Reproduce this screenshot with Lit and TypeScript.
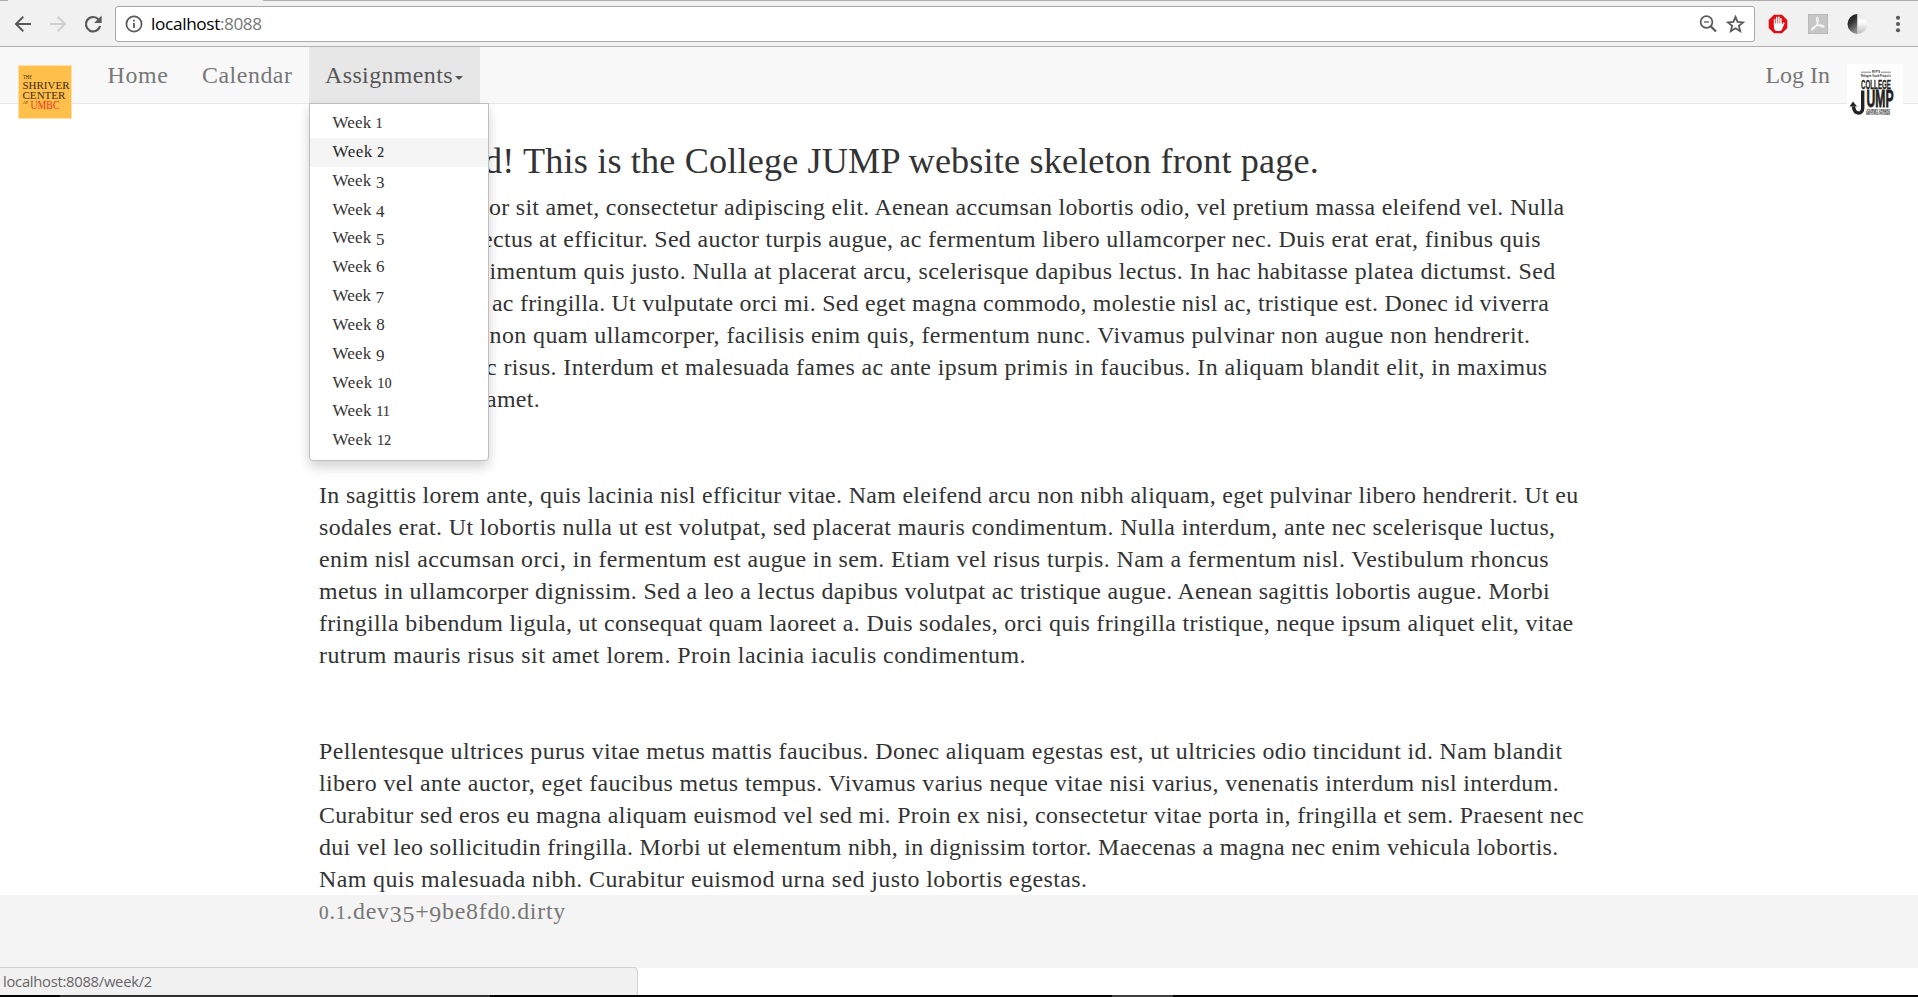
import { LitElement, html, css } from "lit";
import { customElement, property } from "lit/decorators.js";
import { styleMap } from "lit/directives/style-map.js";

/** One run of text whose tracking is adjusted so that it spans a given width. */
@customElement("fit-text")
class FitText extends LitElement {
  @property() text = "";
  @property({ type: Number }) span = 0;
  @property({ type: Boolean }) oldstyle = false;

  static styles = css`
    :host { display: inline-block; white-space: pre; }
    .low { font-size: 0.8em; line-height: 0; -webkit-text-stroke: 0.2px currentColor; }
    .drop { vertical-align: -0.14em; line-height: 0; }
  `;

  firstUpdated() {
    const run = this.renderRoot.querySelector(".run") as HTMLElement;
    const natural = run.getBoundingClientRect().width;
    run.style.letterSpacing = `${(this.span - natural) / this.text.length}px`;
  }

  glyph(c: string) {
    if ("012".includes(c)) return html`<span class="low">${c}</span>`;
    if ("34579".includes(c)) return html`<span class="drop">${c}</span>`;
    return c;
  }

  render() {
    return html`<span class="run">${this.oldstyle ? [...this.text].map((c) => this.glyph(c)) : this.text}</span>`;
  }
}

type Line = { start?: number; text: string; end: number };

const LEFT = 319;

const PARAGRAPHS: Line[][] = [
  [
    { start: 489, text: "or sit amet, consectetur adipiscing elit. Aenean accumsan lobortis odio, vel pretium massa eleifend vel. Nulla", end: 1564.5 },
    { start: 482, text: "ectus at efficitur. Sed auctor turpis augue, ac fermentum libero ullamcorper nec. Duis erat erat, finibus quis", end: 1541 },
    { start: 489.5, text: "imentum quis justo. Nulla at placerat arcu, scelerisque dapibus lectus. In hac habitasse platea dictumst. Sed", end: 1555.5 },
    { start: 492, text: "ac fringilla. Ut vulputate orci mi. Sed eget magna commodo, molestie nisl ac, tristique est. Donec id viverra", end: 1549 },
    { start: 489.5, text: "non quam ullamcorper, facilisis enim quis, fermentum nunc. Vivamus pulvinar non augue non hendrerit.", end: 1530.5 },
    { start: 486, text: "c risus. Interdum et malesuada fames ac ante ipsum primis in faucibus. In aliquam blandit elit, in maximus", end: 1547.5 },
    { start: 486, text: "amet.", end: 540 },
  ],
  [
    { text: "In sagittis lorem ante, quis lacinia nisl efficitur vitae. Nam eleifend arcu non nibh aliquam, eget pulvinar libero hendrerit. Ut eu", end: 1578.5 },
    { text: "sodales erat. Ut lobortis nulla ut est volutpat, sed placerat mauris condimentum. Nulla interdum, ante nec scelerisque luctus,", end: 1555.5 },
    { text: "enim nisl accumsan orci, in fermentum est augue in sem. Etiam vel risus turpis. Nam a fermentum nisl. Vestibulum rhoncus", end: 1549 },
    { text: "metus in ullamcorper dignissim. Sed a leo a lectus dapibus volutpat ac tristique augue. Aenean sagittis lobortis augue. Morbi", end: 1550 },
    { text: "fringilla bibendum ligula, ut consequat quam laoreet a. Duis sodales, orci quis fringilla tristique, neque ipsum aliquet elit, vitae", end: 1573.5 },
    { text: "rutrum mauris risus sit amet lorem. Proin lacinia iaculis condimentum.", end: 1026 },
  ],
  [
    { text: "Pellentesque ultrices purus vitae metus mattis faucibus. Donec aliquam egestas est, ut ultricies odio tincidunt id. Nam blandit", end: 1562.5 },
    { text: "libero vel ante auctor, eget faucibus metus tempus. Vivamus varius neque vitae nisi varius, venenatis interdum nisl interdum.", end: 1559 },
    { text: "Curabitur sed eros eu magna aliquam euismod vel sed mi. Proin ex nisi, consectetur vitae porta in, fringilla et sem. Praesent nec", end: 1584 },
    { text: "dui vel leo sollicitudin fringilla. Morbi ut elementum nibh, in dignissim tortor. Maecenas a magna nec enim vehicula lobortis.", end: 1558.5 },
    { text: "Nam quis malesuada nibh. Curabitur euismod urna sed justo lobortis egestas.", end: 1087.5 },
  ],
];

const WEEK_ENDS = [382, 384, 384, 384.2, 384, 384.2, 383.5, 384.5, 384, 391.5, 389.5, 391];

const fit = (text: string, span: number, oldstyle = false) =>
  html`<fit-text .text=${text} .span=${span} .oldstyle=${oldstyle}></fit-text>`;

@customElement("browser-bar")
class BrowserBar extends LitElement {
  static styles = css`
    :host { display: block; }
    .edge { height: 1px; display: flex; justify-content: space-between; background: #f2f2f2; }
    .edge-a { width: 8px; background: #adadad; }
    .edge-b { width: 1655px; background: #adadad; }
    .bar { box-sizing: border-box; height: 46px; display: flex; align-items: center; background: #f1f1f1; border-bottom: 1px solid #b0b0b0; }
    svg { display: block; flex: none; }
    .back { margin-left: 14px; }
    .fwd { margin-left: 17px; }
    .reload { margin-left: 16px; }
    .address {
      box-sizing: border-box; width: 1640px; height: 36px; margin-left: 12px; padding: 0 9px; margin-top: 1px;
      display: flex; align-items: center; background: #fff; border: 1px solid #a9a9a9; border-radius: 3px;
      font: 17.2px/24px "Open Sans", "Noto Sans", sans-serif; color: #000;
    }
    .url { margin-left: 8px; display: flex; flex: 1; margin-top: -1px; }
    .port { color: #777; }
    .star { margin-left: 9px; }
    .stop { margin-left: 12.500px; }
    .pdf { margin-left: 20px; }
    .moon { margin-left: 19px; }
    .more { margin-left: 28.500px; }
  `;

  render() {
    return html`
      <div class="edge"><span class="edge-a"></span><span class="edge-b"></span></div>
      <div class="bar">
        <svg class="back" width="18" height="18" viewBox="0 0 18 18" fill="none" stroke="#5a5a5a" stroke-width="2"><path d="M17 9H2.5M9.3 1.7 2 9l7.3 7.3" /></svg>
        <svg class="fwd" width="18" height="18" viewBox="0 0 18 18" fill="none" stroke="#d0d0d0" stroke-width="2"><path d="M1 9h14.500M8.700 1.700 16 9l-7.300 7.300" /></svg>
        <svg class="reload" width="20" height="20" viewBox="0 0 20 20"><path d="M15.600 5.500A7.200 7.200 0 1 0 17.100 12" fill="none" stroke="#5a5a5a" stroke-width="2.200" /><path d="M18.600 1.500V9h-7.500z" fill="#5a5a5a" /></svg>
        <div class="address">
          <svg width="18" height="18" viewBox="0 0 18 18"><circle cx="9" cy="9" r="7.600" fill="none" stroke="#5a5a5a" stroke-width="1.700" /><path d="M8.100 8h1.800v5H8.100zM8.100 4.800h1.800v1.800H8.100z" fill="#5a5a5a" /></svg>
          <div class="url">${fit("localhost", 69)}<span class="port">${fit(":8088", 41.5)}</span></div>
          <svg width="18" height="18" viewBox="0 0 18 18" fill="none" stroke="#5a5a5a"><circle cx="7.500" cy="7" r="5.900" stroke-width="1.700" /><path d="M11.700 11.200l5.300 5.300" stroke-width="2.200" /><path d="M5 7h5" stroke-width="1.300" /></svg>
          <svg class="star" width="19" height="18" viewBox="0 0 19 18"><path d="M9.500 1.900l2.100 5 5.400.5-4.100 3.500 1.300 5.300-4.700-2.900-4.700 2.900 1.300-5.300L2 7.400l5.400-.5z" fill="none" stroke="#5a5a5a" stroke-width="1.800" /></svg>
        </div>
        <svg class="stop" width="20" height="20" viewBox="0 0 20 20">
          <path d="M6 .8h8L19.300 6v8L14 19.200H6L.7 14V6z" fill="#e00f14" />
          <path d="M6.600 11V5.500M8.700 10V3.600M10.900 10V3.300M13 10V4.800" stroke="#fff" stroke-width="1.500" stroke-linecap="round" />
          <path d="M5.900 9.500h7.900v1.200l1.400-1.900c.7-.7 1.600-.1 1.300.7l-2.400 5.500c-.7 1.500-1.500 2-2.700 2H9.200c-2.200 0-3.300-1.700-3.300-4z" fill="#fff" />
        </svg>
        <svg class="pdf" width="20" height="20" viewBox="0 0 20 20"><rect width="20" height="20" fill="#b9b9b9" /><rect x="1" y="1" width="18" height="18" fill="#c6c6c6" /><path d="M9 3.500c1.800-.4 1.400 3.200.3 5.600C8 12 6 15.700 4.300 15.900c-1.500-.6 1-3 3.500-3.900 2.800-1 7.600-1.300 8.200.3.200 1.500-3.400.6-5.500-1.800C8.700 8.400 7.700 4 9 3.500z" fill="none" stroke="#f6f6f6" stroke-width="1.300" /></svg>
        <svg class="moon" width="20" height="20" viewBox="0 0 20 20">
          <defs>
            <linearGradient id="dark" x1="0" y1="0" x2="0.400" y2="1"><stop offset="0" stop-color="#111" /><stop offset=".5" stop-color="#333" /><stop offset="1" stop-color="#888" /></linearGradient>
            <linearGradient id="light" x1="0" y1="0" x2="0" y2="1"><stop offset="0" stop-color="#e2e2e2" /><stop offset=".4" stop-color="#fff" /><stop offset="1" stop-color="#bbb" /></linearGradient>
          </defs>
          <path d="M10.500 0a10 10 0 0 0 0 20z" fill="url(#dark)" /><path d="M10.500 0a9.700 10 0 0 1 0 20z" fill="url(#light)" />
        </svg>
        <svg class="more" width="6" height="18" viewBox="0 0 6 18" fill="#5a5a5a"><circle cx="3" cy="2.700" r="2.050" /><circle cx="3" cy="9" r="2.050" /><circle cx="3" cy="15.300" r="2.050" /></svg>
      </div>
    `;
  }
}

@customElement("site-nav")
class SiteNav extends LitElement {
  static styles = css`
    :host { display: block; font: 23.9px/32px "Liberation Serif", serif; color: #777; }
    .nav { box-sizing: border-box; height: 57px; display: flex; align-items: flex-start; background: #f8f8f8; border-bottom: 1px solid #e7e7e7; }
    .logo { display: block; flex: none; }
    .shriver { margin: 18px 20px 0 18px; }
    .jump { margin: 17px 15px 0 0; }
    .item { box-sizing: border-box; height: 56px; padding: 12px 16px 0; flex: none; }
    .home { padding-left: 15.500px; width: 93px; }
    .calendar { padding: 12px 0 0 17px; width: 124px; }
    .open { position: relative; width: 171px; background: #e7e7e7; color: #555; display: flex; }
    .caret { width: 0; height: 0; margin: 17px 0 0 2px; border: 4px solid transparent; border-top-color: #555; border-bottom: 0; }
    .spacer { flex: 1; }
    .login { padding-right: 17px; }
    .menu {
      position: absolute; left: 0; top: 56px; box-sizing: border-box; width: 180px; margin: 0; padding: 5px 0; list-style: none;
      background: #fff; border: 1px solid #bfbfbf; border-radius: 0 0 4px 4px; box-shadow: 0 6px 12px rgba(0, 0, 0, 0.175);
      font-size: 17px; line-height: 22.857px; color: #333;
    }
    .week { padding: 3px 0 3px 22.500px; height: 22.857px; }
    .active { background: #f5f5f5; color: #262626; }
  `;

  render() {
    return html`
      <nav class="nav">
        <svg class="logo shriver" width="54" height="54" viewBox="0 0 54 54" font-family="Liberation Serif, serif" fill="#3c2a12">
          <rect width="54" height="54" fill="#ffe0a6" /><rect x="1" y="1" width="52" height="52" fill="#ffbf4b" />
          <text x="5" y="14" font-size="5.500" textLength="9" lengthAdjust="spacingAndGlyphs">THE</text>
          <text x="4.500" y="23.700" font-size="10.800" textLength="47" lengthAdjust="spacingAndGlyphs">SHRIVER</text>
          <text x="4.500" y="33.500" font-size="10.800" textLength="43" lengthAdjust="spacingAndGlyphs">CENTER</text>
          <text x="5" y="38.500" font-size="4.500" textLength="5" lengthAdjust="spacingAndGlyphs">AT</text>
          <text x="12.500" y="43.500" font-size="11.800" fill="#ee3524" textLength="29" lengthAdjust="spacingAndGlyphs">UMBC</text>
        </svg>
        <div class="item home">${fit("Home", 61)}</div>
        <div class="item calendar">${fit("Calendar", 90.500)}</div>
        <div class="item open">
          ${fit("Assignments", 128)}<span class="caret"></span>
          <ul class="menu">
            ${WEEK_ENDS.map((end, i) => html`<li class="week ${i === 1 ? "active" : ""}">${fit(`Week ${i + 1}`, end - 332, true)}</li>`)}
          </ul>
        </div>
        <span class="spacer"></span>
        <div class="item login">${fit("Log In", 64.500)}</div>
        <svg class="logo jump" width="56" height="56" viewBox="0 0 56 56" font-family="Liberation Sans, sans-serif" font-weight="bold" fill="#222">
          <rect width="56" height="56" fill="#fff" />
          <path d="M14 8.200h10M34 8.200h10" stroke="#666" stroke-width=".8" />
          <text x="25" y="9.400" font-size="3.400" textLength="8" lengthAdjust="spacingAndGlyphs">RYP'S</text>
          <text x="14" y="13.400" font-size="3.500" textLength="30" lengthAdjust="spacingAndGlyphs">Refugee Youth Project's</text>
          <text x="14" y="25" font-size="13.500" stroke="#222" stroke-width=".3" textLength="30" lengthAdjust="spacingAndGlyphs">COLLEGE</text>
          <text x="19.500" y="43" font-size="23.500" stroke="#222" stroke-width=".8" textLength="27" lengthAdjust="spacingAndGlyphs">UMP</text>
          <path d="M15.700 26.500V44c0 7-8.200 7-9.300-1.500" fill="none" stroke="#222" stroke-width="3.400" />
          <path d="M2.500 42.500 6 37.500l4 5z" />
          <text x="19" y="47.600" font-size="3.600" font-style="italic" textLength="24" lengthAdjust="spacingAndGlyphs">JOURNEY UPWARD</text>
          <text x="19" y="51.400" font-size="3.200" font-style="italic" textLength="24" lengthAdjust="spacingAndGlyphs">MENTORING PROGRAM</text>
        </svg>
      </nav>
    `;
  }
}

@customElement("app-root")
class AppRoot extends LitElement {
  static styles = css`
    :host { display: flex; flex-direction: column; height: 997px; overflow: hidden; background: #fff; font: 23.9px/32px "Liberation Serif", serif; color: #333; }
    browser-bar, site-nav { flex: none; }
    site-nav { position: relative; z-index: 2; }
    .content { box-sizing: border-box; padding: 39px 0 0 319px; height: 791px; flex: none; }
    .title { margin: 0 0 11px; padding-left: 165px; font-size: 36.200px; line-height: 37px; font-weight: 400; display: flex; }
    .para { margin: 0 0 64px; }
    .line { display: flex; height: 32px; }
    .footer { height: 73px; padding-left: 319px; background: #f4f4f4; color: #777; flex: none; }
    .status {
      box-sizing: border-box; width: 638px; height: 28px; margin-top: -1px; padding: 1px 0 0 3px; flex: none;
      background: #f1f1f1; border: 1px solid #d2d2d2; border-width: 1px 1px 0 0; border-top-right-radius: 4px;
      font: 14.800px/24px "Open Sans", "Noto Sans", sans-serif; color: #666;
    }
    .taskbar { height: 2px; display: flex; margin-top: auto; background: #050505; flex: none; }
    .task-a { width: 430px; margin-left: 60px; background: #302e2f; }
    .task-b { width: 61px; margin-left: 622px; background: #3c3f3c; }
  `;

  line(l: Line) {
    const start = l.start ?? LEFT;
    return html`<div class="line" style=${styleMap({ paddingLeft: `${start - LEFT}px` })}>${fit(l.text, l.end - start)}</div>`;
  }

  render() {
    return html`
      <browser-bar></browser-bar>
      <site-nav></site-nav>
      <main class="content">
        <h3 class="title">${fit("d! This is the College JUMP website skeleton front page.", 835)}</h3>
        ${PARAGRAPHS.map((p) => html`<div class="para">${p.map((l) => this.line(l))}</div>`)}
      </main>
      <footer class="footer">${fit("0.1.dev35+9be8fd0.dirty", 247, true)}</footer>
      <div class="status">${fit("localhost:8088/week/2", 149)}</div>
      <div class="taskbar"><span class="task-a"></span><span class="task-b"></span></div>
    `;
  }
}
